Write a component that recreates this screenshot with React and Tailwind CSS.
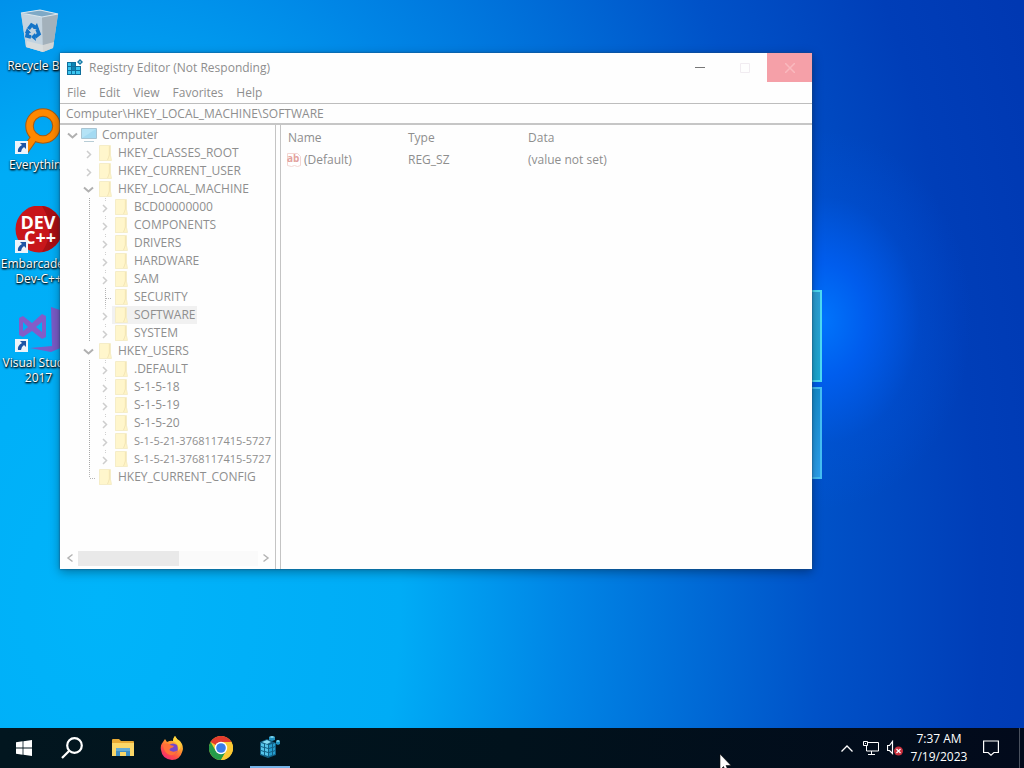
import { useState } from 'react';

const treeItems = [
    { name: 'Computer', level: 0, state: 'open', icon: 'computer' },
    { name: 'HKEY_CLASSES_ROOT', level: 1, state: 'closed' },
    { name: 'HKEY_CURRENT_USER', level: 1, state: 'closed' },
    { name: 'HKEY_LOCAL_MACHINE', level: 1, state: 'open' },
    { name: 'BCD00000000', level: 2, state: 'closed' },
    { name: 'COMPONENTS', level: 2, state: 'closed' },
    { name: 'DRIVERS', level: 2, state: 'closed' },
    { name: 'HARDWARE', level: 2, state: 'closed' },
    { name: 'SAM', level: 2, state: 'closed' },
    { name: 'SECURITY', level: 2, state: 'leaf' },
    { name: 'SOFTWARE', level: 2, state: 'closed' },
    { name: 'SYSTEM', level: 2, state: 'closed' },
    { name: 'HKEY_USERS', level: 1, state: 'open' },
    { name: '.DEFAULT', level: 2, state: 'closed' },
    { name: 'S-1-5-18', level: 2, state: 'closed' },
    { name: 'S-1-5-19', level: 2, state: 'closed' },
    { name: 'S-1-5-20', level: 2, state: 'closed' },
    { name: 'S-1-5-21-3768117415-5727', level: 2, state: 'closed' },
    { name: 'S-1-5-21-3768117415-5727', level: 2, state: 'closed' },
    { name: 'HKEY_CURRENT_CONFIG', level: 1, state: 'last' },
];

const menus = ['File', 'Edit', 'View', 'Favorites', 'Help'];

const RecycleBinIcon = () => (
    <svg viewBox="0 0 48 48" className="size-12">
        <path d="M6 5 L25 2 L43 6 L38 40 L28 44 L11 39 Z" fill="#b9cbd8" />
        <path d="M6 5 L27 9 L28 44 L11 39 Z" fill="#c3d3df" />
        <path d="M27 9 L43 6 L38 40 L28 44 Z" fill="#a3b1bb" />
        <path d="M6 5 L25 2 L43 6 L27 9 Z" fill="#7fa9c6" stroke="#dbe6ed" strokeWidth="1.200" />
        <path d="M12 33 L28 37 L39 34 L38 40 L28 44 L11 39 Z" fill="#dfe0de" opacity=".75" />
        <g fill="none" stroke="#1474c8" strokeWidth="3.600">
            <path d="M13.500 21 L16.500 17 L20 19" />
            <path d="M22 21 L24 26 L20 29" />
            <path d="M16 29 L12 28 L13 23" />
        </g>
        <path d="M18 21 L24 21 L22 15 Z M20 25 L16 29 L21 33 Z M10 25 L16 25 L12 20 Z" fill="#1474c8" />
    </svg>
);

const EverythingIcon = () => (
    <svg viewBox="0 0 48 48" className="size-12">
        <path d="M21 28 L9 45" stroke="#a85a10" strokeWidth="8" />
        <circle cx="28" cy="19" r="13.500" fill="none" stroke="#a85a10" strokeWidth="8.500" />
        <path d="M21 28 L9 45" stroke="#ff8800" strokeWidth="6" />
        <circle cx="28" cy="19" r="13.500" fill="none" stroke="#ff8800" strokeWidth="6.500" />
    </svg>
);

const DevCppIcon = () => (
    <svg viewBox="0 0 48 48" className="size-12">
        <circle cx="24" cy="23" r="23.500" fill="#c8161b" />
        <path d="M27 0 A23.500 23.500 0 0 1 47 26 A23.500 23.500 0 0 1 27 46 Q42 24 27 0" fill="#a80f14" />
        <g fill="#fff" fontFamily="Open Sans, sans-serif" fontWeight="700" fontSize="18" textAnchor="middle">
            <text x="23" y="23">
                DEV
            </text>
            <text x="25" y="38">
                C++
            </text>
        </g>
    </svg>
);

const VisualStudioIcon = () => (
    <svg viewBox="0 0 48 48" className="size-12">
        <path d="M36 2 L48 6 L48 42 L36 47 L15 43 L37 41 Z" fill="#7a5cc8" />
        <path
            fillRule="evenodd"
            d="M4 13 L8 11 L17 18 L27 9 L31 11 L31 32 L27 34 L17 26 L8 32 L4 30 Z M8 17 L8 26 L13 22 Z M27 17 L21 22 L27 27 Z"
            fill="#845cc8"
        />
    </svg>
);

const ShortcutArrow = () => (
    <svg viewBox="0 0 13 13" className="absolute bottom-px left-0 size-[13px]">
        <path d="M0 0h13v13H0z" fill="#eef4fa" />
        <path d="M5 2h6v6L9 6Q6 8 6 11H3Q2 7 7 4Z" fill="#1d55a5" />
    </svg>
);

const RegeditIcon = ({ className }) => (
    <svg viewBox="0 0 18 18" className={className}>
        <path d="M1 3h9v4h5v9H1z" fill="#0f6f9c" />
        <g fill="#3bc4ee">
            <path d="M2 4h3v3H2zM6 4h3v3H6zM2 8h3v3H2zM6 8h3v3H6zM10 8h4v3h-4zM2 12h3v3H2zM6 12h3v3H6zM10 12h4v3h-4z" />
        </g>
        <path d="M6 4h3v3H6zM6 8h3v3H6z" fill="#0c84b4" />
        <path d="M14 0 L17 3 L14 6 L11 3 Z" fill="#167ba8" />
        <path d="M14 2 L15 3 L14 4 L13 3 Z" fill="#c9effb" />
    </svg>
);

const FolderIcon = () => (
    <svg viewBox="0 0 18 18" className="h-[18px] w-[18px] shrink-0">
        <path d="M3 2h12v15H3z" fill="#fff4c4" />
        <path d="M3 2h9v15H3z" fill="#fff6cc" />
        <path d="M3.500 1.500h11v10l1 5h-12z" fill="none" stroke="#f5edc8" />
        <path d="M13.500 2v9l-2 5" fill="none" stroke="#f3e6b8" />
    </svg>
);

const ComputerIcon = () => (
    <svg viewBox="0 0 18 18" className="h-[18px] w-[18px] shrink-0">
        <path d="M1.500 2.500h15v10h-15z" fill="#b5e3f6" stroke="#a9c4d2" />
        <path d="M2 12 L16 3 V12 Z" fill="#a4daf2" />
        <path d="M4 15.500h10" stroke="#b8cdd6" />
    </svg>
);

const StringValueIcon = () => (
    <svg viewBox="0 0 16 16" className="size-4 shrink-0">
        <path d="M1.500 1.500h10l3 3v9l-3 1-3-1-3 1-4-1z" fill="#fff" stroke="#f3d6d3" />
        <text x="1" y="10" fontSize="10" fontWeight="700" fontFamily="Open Sans, sans-serif" fill="#e3a39e">
            ab
        </text>
    </svg>
);

// cell in front of a tree icon: an arrow, or the dotted branch for keys without children
const Expander = ({ state, level }) => (
    <svg viewBox="0 0 16 18" className="h-[18px] w-4 shrink-0" fill="none">
        {state === 'open' && <path d="M4 7.500 L8.500 11.500 L13 7.500" stroke="#b0b0b0" strokeWidth="2" />}
        {state === 'closed' && <path d="M7 7 L10.500 10.500 L7 14" stroke="#cdcdcd" strokeWidth="1.500" />}
        {state === 'closed' && level === 2 && <path d="M9.500 0v4" stroke="#d0d0d0" strokeDasharray="1 1" />}
        {state === 'leaf' && <path d="M9.500 0v18M10 10.500h6" stroke="#b5b5b5" strokeDasharray="1 1" />}
        {state === 'last' && <path d="M9.500 0v10M10 10.500h6" stroke="#b5b5b5" strokeDasharray="1 1" />}
    </svg>
);

const TreeRow = ({ item, selected, onSelect }) => (
    <li role="treeitem" aria-selected={selected} className="flex h-[18px] items-center">
        {item.level > 0 && <span className="w-4 shrink-0" />}
        {item.level > 1 && (
            <svg viewBox="0 0 16 18" className="h-[18px] w-4 shrink-0">
                <path d="M9.500 0v18" stroke="#a8a8a8" strokeDasharray="1 1" />
            </svg>
        )}
        <Expander state={item.state} level={item.level} />
        <button
            onClick={onSelect}
            className={`flex h-[18px] items-center whitespace-nowrap pr-0.5 ${selected ? 'bg-[#f1f1f1]' : ''}`}
        >
            {item.icon === 'computer' ? <ComputerIcon /> : <FolderIcon />}
            <span className={item.name.length > 20 ? 'pl-1 text-[11px]' : 'pl-1'}>{item.name}</span>
        </button>
    </li>
);

const DesktopIcon = ({ label, shortcut, children }) => (
    <button className="flex h-[99px] w-full flex-col items-center">
        <span className="relative">
            {children}
            {shortcut && <ShortcutArrow />}
        </span>
        <span className="mt-0.5 whitespace-pre text-center text-xs leading-[15px] text-white [text-shadow:1px_1px_2px_#000,0_1px_2px_#000]">
            {label}
        </span>
    </button>
);

const RegistryWindow = () => {
    const [selected, setSelected] = useState(10);
    const [path, setPath] = useState('Computer\\HKEY_LOCAL_MACHINE\\SOFTWARE');

    return (
        <section className="absolute left-[60px] top-[53px] flex h-[516px] w-[752px] flex-col bg-[#fefefe] text-xs text-[#8e8e8e] shadow-[0_0_2px_#1c4a70,0_3px_10px_rgba(0,0,0,0.35)]">
            <header className="flex h-[30px] items-start">
                <RegeditIcon className="ml-1.5 mt-1.5 size-[18px]" />
                <h1 className="ml-[5px] flex-1 leading-[30px]">Registry Editor (Not Responding)</h1>
                <div className="flex">
                    <button aria-label="Minimize" className="flex h-[29px] w-[45px] items-center justify-center">
                        <svg viewBox="0 0 10 10" className="size-2.5">
                            <path d="M0 4.500h10" stroke="#777" />
                        </svg>
                    </button>
                    <button aria-label="Maximize" className="flex h-[29px] w-[45px] items-center justify-center">
                        <svg viewBox="0 0 10 10" className="size-2.5" fill="none">
                            <path d="M.5 .5h9v9h-9z" stroke="#f1ecf1" />
                        </svg>
                    </button>
                    <button aria-label="Close" className="flex h-[29px] w-[45px] items-center justify-center bg-[#f5a0a8]">
                        <svg viewBox="0 0 10 10" className="size-2.5" fill="none">
                            <path d="M0 0 L10 10 M10 0 L0 10" stroke="#f9b9be" strokeWidth="1.500" />
                        </svg>
                    </button>
                </div>
            </header>

            <nav className="flex h-5 items-center gap-[13px] pl-[7px]">
                {menus.map(menu => (
                    <button key={menu}>{menu}</button>
                ))}
            </nav>

            <input
                type="text"
                aria-label="Address"
                value={path}
                onChange={e => setPath(e.target.value)}
                className="h-[22px] w-full border-b-2 border-t border-b-[#c6c6c6] border-t-[#bdbdbd] px-1.5 outline-none"
            />

            <div className="flex min-h-0 flex-1">
                <div className="flex w-[216px] shrink-0 flex-col border-r border-[#c4c4c4] pt-px">
                    <ul role="tree" className="flex-1 pl-1">
                        {treeItems.map((item, i) => (
                            <TreeRow key={i} item={item} selected={selected === i} onSelect={() => setSelected(i)} />
                        ))}
                    </ul>
                    <div className="mb-[3px] flex h-4 items-center pl-0.5">
                        <svg viewBox="0 0 16 16" className="size-4" fill="none">
                            <path d="M10.500 4.500 L6 8 L10.500 11.500" stroke="#b4b4b4" strokeWidth="1.500" />
                        </svg>
                        <div className="h-[15px] flex-1 bg-[#fafafa]">
                            <div className="h-full w-[56%] bg-[#e9e9e9]" />
                        </div>
                        <svg viewBox="0 0 16 16" className="mr-px size-4" fill="none">
                            <path d="M5.500 4.500 L10 8 L5.500 11.500" stroke="#b4b4b4" strokeWidth="1.500" />
                        </svg>
                    </div>
                </div>

                <div className="ml-1 flex-1 border-l border-[#c4c4c4] pl-px pt-px">
                    <table className="w-full table-fixed text-left">
                        <thead>
                            <tr className="h-6">
                                <th className="w-[120px] pl-1.5 font-normal">Name</th>
                                <th className="w-[120px] pl-1.5 font-normal">Type</th>
                                <th className="pl-1.5 font-normal">Data</th>
                            </tr>
                        </thead>
                        <tbody>
                            <tr className="h-5">
                                <td className="pl-1">
                                    <span className="flex items-center gap-0.5">
                                        <StringValueIcon />
                                        (Default)
                                    </span>
                                </td>
                                <td className="pl-1.5">REG_SZ</td>
                                <td className="pl-1.5">(value not set)</td>
                            </tr>
                        </tbody>
                    </table>
                </div>
            </div>
        </section>
    );
};

// right hand part of the wallpaper's light window
const WallpaperGlass = () => (
    <div className="absolute left-[700px] top-[290px] flex w-[122px] flex-col gap-[5px]">
        <div className="h-[92px] border-2 border-[#4ddcf5] bg-linear-to-b from-[#2d9fd6] to-[#1ba9d3]" />
        <div className="h-[92px] border-2 border-[#45c0f5] bg-linear-to-b from-[#178fd0] to-[#2ba0ee]" />
    </div>
);

const StartIcon = () => (
    <svg viewBox="0 0 16 16" className="size-4">
        <path d="M0 2.200 L6.600 1.300 V7.600 H0Z M7.400 1.200 L16 0 V7.600 H7.400Z M0 8.400 H6.600 V14.700 L0 13.800Z M7.400 8.400 H16 V16 L7.400 14.800Z" fill="#fff" />
    </svg>
);

const SearchIcon = () => (
    <svg viewBox="0 0 22 22" className="size-[22px]" fill="none" stroke="#fff" strokeWidth="2.200">
        <circle cx="13.500" cy="8.500" r="7.300" />
        <path d="M8.300 13.700 L1 21" />
    </svg>
);

const ExplorerIcon = () => (
    <svg viewBox="0 0 22 18" className="h-[18px] w-[22px]">
        <path d="M0 1 Q0 0 1 0 H7 L9 2 H21 Q22 2 22 3 V17 H0Z" fill="#e8aa35" />
        <path d="M0 4 H22 V17 H0Z" fill="#fbd768" />
        <path d="M4 17 V10 Q4 9 5 9 H17 Q18 9 18 10 V17 H14 V13 H8 V17Z" fill="#3f8fc5" />
        <path d="M4 12 V10 Q4 9 5 9 H17 Q18 9 18 10 V12Z" fill="#64abd4" />
    </svg>
);

const FirefoxIcon = () => (
    <svg viewBox="0 0 24 24" className="size-6">
        <defs>
            <linearGradient id="ff" x1=".85" y1="0" x2=".2" y2="1">
                <stop offset="0" stopColor="#ffe94a" />
                <stop offset=".4" stopColor="#ff9a2e" />
                <stop offset=".7" stopColor="#ff4f45" />
                <stop offset="1" stopColor="#f0257d" />
            </linearGradient>
        </defs>
        <path d="M3 6 L5 3 L7 6 Q11 4 13 5 Q13 2 15 0 Q17 4 20 5 Q24 10 22.500 15 Q20 24 12 24 Q2 23 1 14 Q0 9 3 6Z" fill="url(#ff)" />
        <path d="M9 9 Q13 6 17 9 Q19 14 16 17 Q12 19 8 16 Q6 12 9 9Z" fill="#7548ca" />
        <path d="M3 9 Q7 6 10 9 L14 10 Q13 12 11 12 Q8 14 11 15 Q14 17 18 14 Q15 20 10 19 Q4 17 3 9Z" fill="#ff7139" />
        <path d="M13 5 Q20 8 18 15 Q22 12 20 6 Q17 4 15 0 Q13 2 13 5Z" fill="#ffd43c" />
    </svg>
);

const ChromeIcon = () => (
    <svg viewBox="0 0 24 24" className="size-6">
        <circle cx="12" cy="12" r="12" fill="#fcc934" />
        <path d="M12 12 L1.600 6 A12 12 0 0 1 22.400 6 L12 6Z" fill="#e33b2e" />
        <path d="M1.600 6 A12 12 0 0 0 12 24 L17.200 15 L12 12 L6.800 15Z" fill="#259b49" />
        <path d="M22.400 6 A12 12 0 0 1 12 24 L17.200 15 L12 6Z" fill="#fcc934" />
        <circle cx="12" cy="12" r="6.200" fill="#fff" />
        <circle cx="12" cy="12" r="4.800" fill="#3b7de9" />
    </svg>
);

const RegistryTaskIcon = () => (
    <svg viewBox="0 0 22 24" className="h-6 w-[22px]">
        <path d="M1 7 L8 4 L17 8 V20 L9 23 L1 20Z" fill="#125f84" />
        <path d="M2 8 L5 9 V12 L2 11Z M6 9 L9 10 V13 L6 12Z M2 12 L5 13 V16 L2 15Z M6 13 L9 14 V17 L6 16Z M2 16 L5 17 V20 L2 19Z M6 17 L9 18 V21 L6 20Z" fill="#55c5ea" />
        <path d="M10 10 L13 9 V12 L10 13Z M14 9 L16 8 V11 L14 12Z M10 14 L13 13 V16 L10 17Z M14 13 L16 12 V15 L14 16Z M10 18 L13 17 V20 L10 21Z M14 17 L16 16 V19 L14 20Z" fill="#259dce" />
        <path d="M3 7 L8 5 L12 7 L8 9Z" fill="#86dcf4" />
        <path d="M13 1 L16 2 V5 L13 6 L10 5 V2Z M19 5 L21 6 V9 L19 10 L17 9 V6Z" fill="#2190bd" />
        <path d="M13 1 L16 2 L13 3 L10 2Z M19 5 L21 6 L19 7 L17 6Z" fill="#83ddf5" />
    </svg>
);

const Taskbar = () => (
    <footer className="relative flex h-10 shrink-0 items-stretch bg-linear-to-r from-[#02161f] via-[#01121c] to-[#020a1b] text-white">
        <button aria-label="Start" className="flex w-12 items-center justify-center">
            <StartIcon />
        </button>
        <button aria-label="Search" className="flex w-12 items-center justify-center">
            <SearchIcon />
        </button>
        <div className="ml-0.5 flex">
            <button aria-label="File Explorer" className="flex w-[49px] items-center justify-center">
                <ExplorerIcon />
            </button>
            <button aria-label="Firefox" className="flex w-[49px] items-center justify-center">
                <FirefoxIcon />
            </button>
            <button aria-label="Chrome" className="flex w-[49px] items-center justify-center">
                <ChromeIcon />
            </button>
            <button aria-label="Registry Editor" className="flex w-[49px] justify-center">
                <span className="flex w-10 items-center justify-center border-b-2 border-[#76b3e8]">
                    <RegistryTaskIcon />
                </span>
            </button>
        </div>

        <div className="ml-auto flex">
            <button aria-label="Show hidden icons" className="flex w-6 items-center justify-center">
                <svg viewBox="0 0 12 7" className="h-[7px] w-3" fill="none">
                    <path d="M.5 6.500 L6 1 L11.500 6.500" stroke="#fff" strokeWidth="1.300" />
                </svg>
            </button>
            <button aria-label="Network" className="flex w-6 items-center justify-center">
                <svg viewBox="0 0 16 14" className="h-3.5 w-4" fill="none" stroke="#fff">
                    <path d="M5 1.500h10.500v8.500H3.500V5M8.500 10v3M5 13.500h7" />
                    <path d="M.5 .5h4v4h-4zM2 2.500h1" />
                </svg>
            </button>
            <button aria-label="Volume muted" className="flex w-6 items-center justify-center">
                <svg viewBox="0 0 16 16" className="size-4" fill="none">
                    <path d="M.5 5.500h2l3-4v12l-3-3h-2z" stroke="#fff" strokeWidth="1.200" />
                    <circle cx="11.500" cy="11" r="4.500" fill="#c82f3c" />
                    <path d="M9.500 9l4 4M13.500 9l-4 4" stroke="#fff" strokeWidth="1.200" />
                </svg>
            </button>
            <button className="w-16 whitespace-nowrap text-center text-xs leading-[18px]">
                <time className="block">7:37 AM</time>
                <time className="block">7/19/2023</time>
            </button>
            <button aria-label="Notifications" className="flex w-10 items-center justify-center">
                <svg viewBox="0 0 16 16" className="size-4" fill="none">
                    <path d="M.6 1h14.800v11.500h-4.500L8 15.200 5.100 12.500H.6z" stroke="#fff" strokeWidth="1.200" />
                </svg>
            </button>
            <button aria-label="Show desktop" className="ml-2 w-[5px] border-l border-[#4a515e]" />
        </div>

        <svg viewBox="0 0 12 19" className="absolute bottom-[-5px] left-[719px] h-[19px] w-3">
            <path d="M1 0 V16 L4.500 12.500 L7 18 L9.500 17 L7 11.500 H12Z" fill="#fff" stroke="#111" strokeWidth=".6" />
        </svg>
    </footer>
);

const App = () => {
    return (
        <div className="flex h-screen flex-col overflow-hidden font-['Open_Sans','Noto_Sans',sans-serif]">
            <main className="relative flex-1 overflow-hidden bg-[radial-gradient(ellipse_150px_190px_at_822px_320px,rgba(0,118,255,0.95)_0,rgba(0,100,255,0.7)_30%,rgba(0,90,240,0.2)_65%,rgba(0,80,230,0)_100%),radial-gradient(ellipse_1000px_1500px_at_100px_600px,#00b4fa_0,#00acf6_30%,#0086e6_46%,#006ad6_60%,#0052c8_72%,#003eb8_88%,#0038b2_100%)]">
                <WallpaperGlass />
                <div className="flex w-[77px] flex-col pt-2">
                    <DesktopIcon label="Recycle Bin">
                        <RecycleBinIcon />
                    </DesktopIcon>
                    <DesktopIcon label="Everything" shortcut>
                        <EverythingIcon />
                    </DesktopIcon>
                    <DesktopIcon label={'Embarcadero\nDev-C++'} shortcut>
                        <DevCppIcon />
                    </DesktopIcon>
                    <DesktopIcon label={'Visual Studio\n2017'} shortcut>
                        <VisualStudioIcon />
                    </DesktopIcon>
                </div>
                <RegistryWindow />
            </main>
            <Taskbar />
        </div>
    );
};

export default App;
